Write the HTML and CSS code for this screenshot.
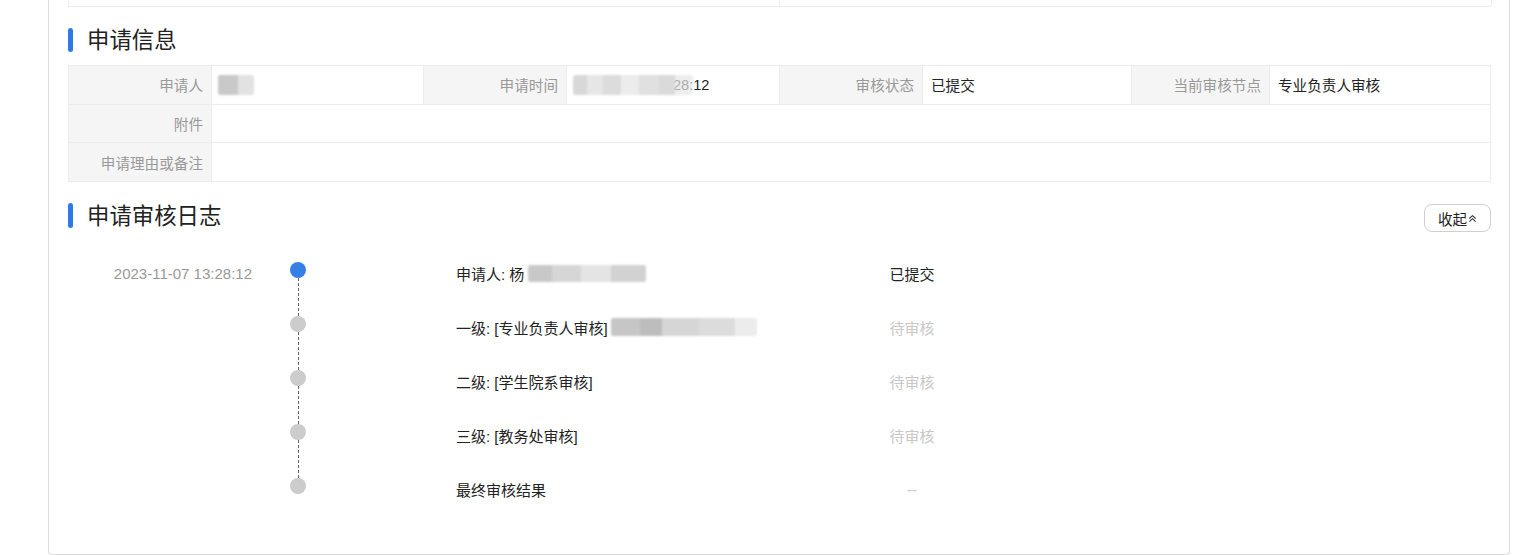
FILE: index.html
```html
<!DOCTYPE html>
<html lang="zh-CN">
<head>
<meta charset="utf-8">
<title>申请详情</title>
<link rel="stylesheet" href="styles.css">
</head>
<body>
<div class="page">
  <div class="card">
    <div class="prev-table">
      <div class="pt-cell"></div>
      <div class="pt-cell"></div>
    </div>

    <div class="section-title">
      <span class="bar"></span>
      <h2>申请信息</h2>
    </div>

    <div class="info-grid">
      <div class="lbl">申请人</div>
      <div class="val"><span class="mosaic m-name"></span></div>
      <div class="lbl">申请时间</div>
      <div class="val val-time">2023-11-07 13:28:12<span class="mosaic m-time"></span></div>
      <div class="lbl">审核状态</div>
      <div class="val">已提交</div>
      <div class="lbl">当前审核节点</div>
      <div class="val">专业负责人审核</div>

      <div class="lbl">附件</div>
      <div class="val span-7"></div>

      <div class="lbl">申请理由或备注</div>
      <div class="val span-7"></div>
    </div>

    <div class="section-head">
      <div class="section-title section-title-inline">
        <span class="bar"></span>
        <h2>申请审核日志</h2>
      </div>
      <button class="collapse-btn" type="button">收起<svg class="chev" viewBox="0 0 10 10" width="9" height="9" aria-hidden="true"><path d="M1.5 5 L5 1.8 L8.5 5 M1.5 8.4 L5 5.2 L8.5 8.4" fill="none" stroke="#333" stroke-width="1.2"/></svg></button>
    </div>

    <div class="timeline">
      <div class="tl-row">
        <div class="tl-date">2023-11-07 13:28:12</div>
        <div class="tl-axis line"><span class="dot dot-blue"></span></div>
        <div class="tl-gap"></div>
        <div class="tl-content">申请人: 杨<span class="mosaic m-applicant"></span></div>
        <div class="tl-status done">已提交</div>
      </div>
      <div class="tl-row">
        <div class="tl-date"></div>
        <div class="tl-axis line"><span class="dot"></span></div>
        <div class="tl-gap"></div>
        <div class="tl-content">一级: [专业负责人审核] <span class="mosaic m-reviewer"></span></div>
        <div class="tl-status">待审核</div>
      </div>
      <div class="tl-row">
        <div class="tl-date"></div>
        <div class="tl-axis line"><span class="dot"></span></div>
        <div class="tl-gap"></div>
        <div class="tl-content">二级: [学生院系审核]</div>
        <div class="tl-status">待审核</div>
      </div>
      <div class="tl-row">
        <div class="tl-date"></div>
        <div class="tl-axis line"><span class="dot"></span></div>
        <div class="tl-gap"></div>
        <div class="tl-content">三级: [教务处审核]</div>
        <div class="tl-status">待审核</div>
      </div>
      <div class="tl-row">
        <div class="tl-date"></div>
        <div class="tl-axis"><span class="dot"></span></div>
        <div class="tl-gap"></div>
        <div class="tl-content">最终审核结果</div>
        <div class="tl-status">--</div>
      </div>
    </div>
  </div>
</div>
</body>
</html>
```

FILE: styles.css
```css
* {
  box-sizing: border-box;
}

html, body {
  margin: 0;
  padding: 0;
  background: #fff;
}

body {
  font-family: "Liberation Sans", "Noto Sans CJK SC", sans-serif;
  color: #333;
  width: 1536px;
  height: 555px;
  overflow: hidden;
}

.page {
  padding-left: 48px;
}

.card {
  width: 1462px;
  border: 1px solid #dcdcdc;
  border-top: none;
  border-radius: 0 0 4px 4px;
  padding: 0 18px 38px 19px;
  background: #fff;
}

/* tail of a previous table scrolled out of view */
.prev-table {
  display: grid;
  grid-template-columns: 711px 712px;
  height: 7px;
  border-left: 1px solid #ebebf0;
  border-bottom: 1px solid #ebebf0;
}

.pt-cell {
  border-right: 1px solid #ebebf0;
}

.section-title {
  display: flex;
  align-items: center;
  height: 24px;
  margin: 21px 0 13px;
}

.section-title-inline {
  margin: 0;
  height: 25px;
}

.bar {
  width: 5px;
  height: 100%;
  border-radius: 3px;
  background: #2f7be5;
  margin-right: 14px;
}

.section-title h2 {
  margin: 3px 0 0;
  font-size: 22.4px;
  font-weight: normal;
  color: #222;
  line-height: 1;
}

.info-grid {
  display: grid;
  grid-template-columns: 143px 212px 143px 213px 143px 209px 138px 221px;
  border-left: 1px solid #ebebf0;
  border-top: 1px solid #ebebf0;
  font-size: 14.6px;
}

.lbl,
.val {
  height: 38.7px;
  display: flex;
  align-items: center;
  padding: 0 8px;
  border-right: 1px solid #ebebf0;
  border-bottom: 1px solid #ebebf0;
}

.lbl {
  justify-content: flex-end;
  background: #f5f5f5;
  color: #999;
}

.val {
  color: #222;
  background: #fff;
}

.span-7 {
  grid-column: span 7;
}

.val-time {
  position: relative;
  padding-left: 8px;
}

.mosaic {
  display: inline-block;
  border-radius: 2px;
  filter: blur(1.2px);
}

.m-name {
  width: 36px;
  height: 20px;
  margin-left: -2px;
  background:
    linear-gradient(90deg, #c9c9c9 0 55%, #e2e2e2 55% 100%);
}

.m-time {
  position: absolute;
  left: 6px;
  top: 9px;
  width: 120px;
  height: 20px;
  background: linear-gradient(90deg, #d8d8d8 0 12%, #e6e6e6 12% 25%, #dcdcdc 25% 40%, #ececec 40% 55%, #e0e0e0 55% 72%, #dadada 72% 85%, rgba(230,230,230,0.7) 85% 100%);
}

.section-head {
  display: flex;
  justify-content: space-between;
  align-items: flex-start;
  height: 29px;
  margin: 21px 0 14px;
}

.collapse-btn {
  margin-top: 1px;
  width: 67px;
  height: 28px;
  border: 1px solid #cfcfcf;
  border-radius: 8px;
  background: #fff;
  font-family: "Liberation Sans", "Noto Sans CJK SC", sans-serif;
  font-size: 14.6px;
  color: #222;
  padding: 0 0 0 13px;
  display: flex;
  align-items: center;
  cursor: pointer;
}

.chev {
  margin-left: 1px;
  margin-top: 1px;
}

.timeline {
  font-size: 15px;
}

.tl-row {
  display: grid;
  grid-template-columns: 184px 30px 32px 142px 356px 200px;
  height: 54px;
  align-items: center;
}

.tl-date {
  grid-column: 1;
  text-align: right;
  color: #999;
}

.tl-axis {
  grid-column: 3;
  position: relative;
  height: 100%;
}

.tl-gap {
  grid-column: 4;
}

.dot {
  position: absolute;
  left: 8px;
  top: 16px;
  width: 16px;
  height: 16px;
  border-radius: 50%;
  background: #cccccc;
}

.dot-blue {
  background: #3580e6;
}

.tl-axis.line::after {
  content: "";
  position: absolute;
  left: 16px;
  top: 32px;
  height: 38px;
  border-left: 1px dashed #666;
}

.tl-content {
  grid-column: 5;
  color: #222;
  white-space: nowrap;
  display: flex;
  align-items: center;
}

.m-applicant {
  width: 118px;
  height: 17px;
  margin-left: 4px;
  background: linear-gradient(90deg, #c8c8c8 0 20%, #d6d6d6 20% 45%, #e4e4e4 45% 70%, #d2d2d2 70% 100%);
}

.m-reviewer {
  width: 146px;
  height: 18px;
  margin-left: 3px;
  background: linear-gradient(90deg, #c6c6c6 0 20%, #bdbdbd 20% 35%, #d6d6d6 35% 60%, #dcdcdc 60% 85%, #ececec 85% 100%);
}

.tl-status {
  grid-column: 6;
  text-align: center;
  color: #c8c8c8;
}

.tl-status.done {
  color: #222;
}
```
